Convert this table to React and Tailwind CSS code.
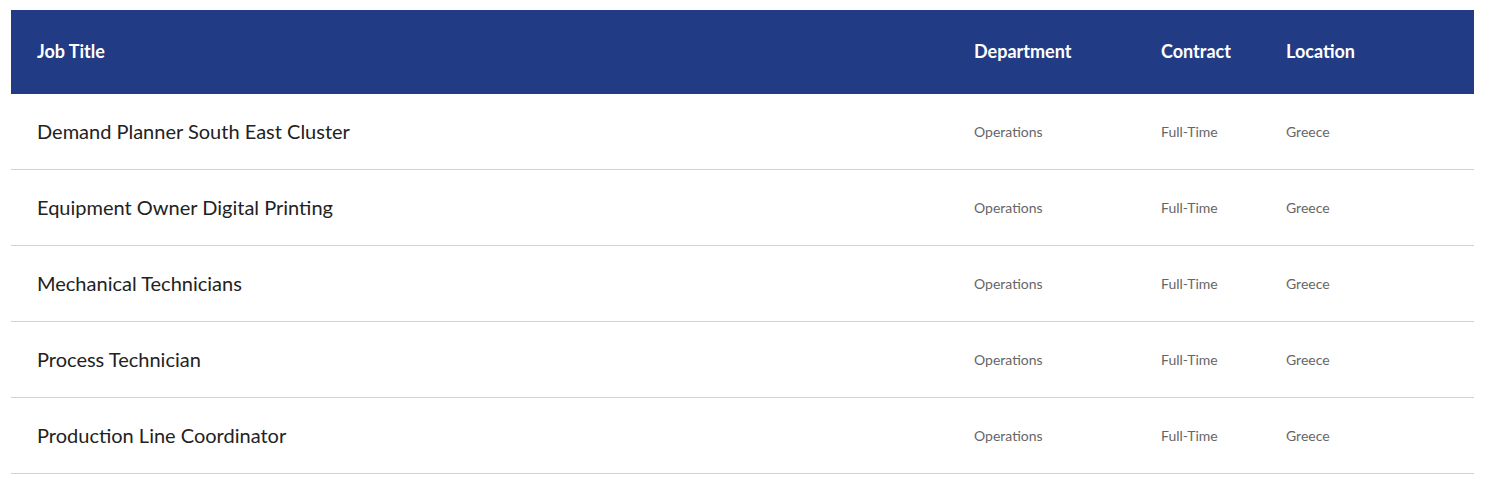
const jobs = [
  "Demand Planner South East Cluster",
  "Equipment Owner Digital Printing",
  "Mechanical Technicians",
  "Process Technician",
  "Production Line Coordinator",
];

const cols = "grid grid-cols-[937px_187px_125px_1fr] items-center";

export default function App() {
  return (
    <div className="min-h-screen bg-white pt-[10px] pl-[11px] pr-[12px] font-['Lato',sans-serif]">
      <div className={`${cols} h-[84px] pb-[2px] bg-[#213b85] text-white text-[18px] font-bold`}>
        <div className="pl-[26px]">Job Title</div>
        <div className="pl-[26px]">Department</div>
        <div className="pl-[26px]">Contract</div>
        <div className="pl-[26px]">Location</div>
      </div>
      {jobs.map((title) => (
        <div key={title} className={`${cols} h-[76px] border-b border-[#d2d2d2]`}>
          <div className="pl-[26px] pb-[2px] text-[20px] text-[#222]">{title}</div>
          <div className="pl-[26px] text-[14px] text-[#666]">Operations</div>
          <div className="pl-[26px] text-[14px] text-[#666]">Full-Time</div>
          <div className="pl-[26px] text-[14px] text-[#666]">Greece</div>
        </div>
      ))}
    </div>
  );
}
